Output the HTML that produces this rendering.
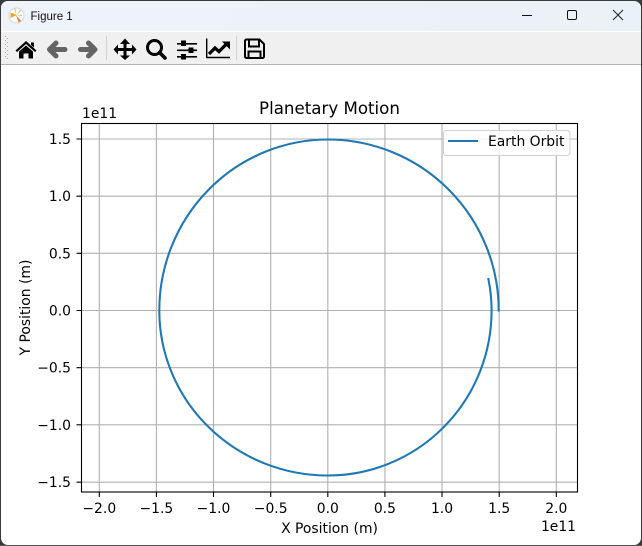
<!DOCTYPE html>
<html>
<head>
<meta charset="utf-8">
<style>
html,body{margin:0;padding:0;width:642px;height:546px;overflow:hidden;background:#fff}
svg{display:block;position:absolute;left:0;top:0}
.m{font-family:"DejaVu Sans",sans-serif;font-size:13.9px;fill:#000}
</style>
</head>
<body>
<svg width="642" height="546" viewBox="0 0 642 546" xmlns="http://www.w3.org/2000/svg">
<defs><linearGradient id="tb" x1="0" x2="1" y1="0" y2="0"><stop offset="0" stop-color="#eff3fa"/><stop offset="1" stop-color="#e9f2f6"/></linearGradient></defs>
<rect width="642" height="546" fill="#3a3a3a"/>
<rect x="1" y="1" width="640" height="544" rx="7" fill="#fff"/>
<path d="M1 31V8a7 7 0 0 1 7-7H634a7 7 0 0 1 7 7V31Z" fill="url(#tb)"/>
<rect x="1" y="31" width="640" height="1" fill="#fff"/>
<rect x="1" y="32" width="640" height="32" fill="#f0f0f0"/>
<rect x="1" y="64" width="640" height="1" fill="#b4b4b4"/>
<rect x="0" y="545" width="642" height="1" fill="#555"/>

<!-- app icon -->
<circle cx="16.5" cy="15.5" r="7.5" fill="#fff" stroke="#d4d4d4"/>
<path d="M10.500 12.500 17 15 10.500 18Z" fill="#f2a32e"/>
<path d="M16 15 21 21 18.500 22.500Z" fill="#f07838"/>
<path d="M16.500 15.500 20 9.500 21 10.500Z" fill="#a8d880"/>
<path d="M16.500 15.500 14 9 15.500 8.500Z" fill="#e8c48a"/>
<path d="M16.500 15.500 22 14.500 22 16Z" fill="#a9dca0"/>
<text x="30.5" y="20" font-family="'Liberation Sans',sans-serif" font-size="11.500px" fill="#111">Figure 1</text>

<!-- window controls -->
<rect x="522" y="15" width="10" height="1" fill="#111"/>
<rect x="567.5" y="10.5" width="9" height="9" rx="1.5" fill="none" stroke="#111"/>
<path d="M613 10 623 20M623 10 613 20" stroke="#222" stroke-width="1" fill="none"/>

<!-- grip -->
<g fill="#a8a8a8"><rect x="5" y="36" width="1" height="1"/><rect x="7" y="38" width="1" height="1"/><rect x="5" y="40" width="1" height="1"/><rect x="7" y="42" width="1" height="1"/><rect x="5" y="44" width="1" height="1"/><rect x="7" y="46" width="1" height="1"/><rect x="5" y="48" width="1" height="1"/><rect x="7" y="50" width="1" height="1"/><rect x="5" y="52" width="1" height="1"/><rect x="7" y="54" width="1" height="1"/><rect x="5" y="56" width="1" height="1"/><rect x="7" y="58" width="1" height="1"/></g>

<!-- home -->
<path d="M26 41 36.500 50.500 35 52 26 44 17 52 15.500 50.500Z" fill="#000"/>
<path d="M31 42.500h3v5l-3-2.600Z" fill="#000"/>
<path d="M19 51.500 26 45.500 33 51.500V58.500H28.500V53.500H23.500V58.500H19Z" fill="#000"/>
<!-- back -->
<path d="M65 49.500H54M56 43 49.500 49.500 56 56" fill="none" stroke="#646464" stroke-width="5" stroke-linecap="round" stroke-linejoin="round"/>
<!-- forward -->
<path d="M80.500 49.500H91M88.500 43 95 49.500 88.500 56" fill="none" stroke="#646464" stroke-width="5" stroke-linecap="round" stroke-linejoin="round"/>
<rect x="106" y="36" width="1" height="24" fill="#d2d2d2"/>
<!-- move -->
<path d="M125 38.500 130 44H126.500V48H132V44.500L136.500 49.500 132 54.500V51H126.500V55.500H130L125 60 120 55.500H123.500V51H118V54.500L113.500 49.500 118 44.500V48H123.500V44H120Z" fill="#000"/>
<!-- zoom -->
<circle cx="154.500" cy="47.500" r="7" fill="none" stroke="#000" stroke-width="3"/>
<path d="M159.500 52.500 165 58" stroke="#000" stroke-width="3.600" stroke-linecap="round"/>
<!-- sliders -->
<g fill="#000"><rect x="177" y="43" width="20" height="1.600"/><rect x="177" y="49.500" width="20" height="1.600"/><rect x="177" y="56" width="20" height="1.600"/><rect x="181" y="40.500" width="5" height="5.500"/><rect x="188.500" y="47.500" width="5" height="5.500"/><rect x="181" y="54" width="5" height="5.500"/></g>
<!-- chart -->
<path d="M206.500 57.500H230" stroke="#000" stroke-width="1.600" fill="none"/>
<path d="M206.700 38.500V58" stroke="#000" stroke-width="1.400" fill="none"/>
<path d="M209 54 215 48 219 51.500 226 44.500" stroke="#000" stroke-width="3.200" fill="none"/>
<path d="M222 41.500H230V49.500Z" fill="#000"/>
<rect x="236" y="36" width="1" height="24" fill="#d2d2d2"/>
<!-- save -->
<path d="M246.500 39.500H259.500L264 44V56.500a1.500 1.500 0 0 1-1.500 1.500H246.500a1.500 1.500 0 0 1-1.500-1.500V41a1.500 1.500 0 0 1 1.500-1.500Z" fill="none" stroke="#000" stroke-width="2"/>
<path d="M249 40V46.500H259V40" fill="none" stroke="#000" stroke-width="2"/>
<path d="M248.500 58V51.500H260.500V58" fill="none" stroke="#000" stroke-width="2"/>

<!-- grid -->
<g stroke="#b0b0b0" stroke-width="1.100" fill="none">
<path d="M99.300 124V492M156.400 124V492M213.500 124V492M270.700 124V492M327.800 124V492M384.900 124V492M442 124V492M499.200 124V492M556.300 124V492"/>
<path d="M82 139H577M82 196.200H577M82 253.300H577M82 310.500H577M82 367.700H577M82 424.800H577M82 482.200H577"/>
</g>

<!-- orbit -->
<path d="M498.700 310.500A170.800 171 0 0 0 327.900 139.500A168.600 171 0 0 0 159.300 310.500A168.600 165 0 0 0 327.900 475.500A163.700 165 0 0 0 491.600 310.500Q491.600 295 488.400 279" fill="none" stroke="#1f77b4" stroke-width="2.080" stroke-linecap="square"/>

<!-- axes -->
<rect x="81.500" y="123.500" width="496" height="368.500" fill="none" stroke="#000" stroke-width="1.100"/>
<g stroke="#000" stroke-width="1.100" fill="none">
<path d="M99.300 492V497M156.400 492V497M213.500 492V497M270.700 492V497M327.800 492V497M384.900 492V497M442 492V497M499.200 492V497M556.300 492V497"/>
<path d="M76.500 139H81.500M76.500 196.200H81.500M76.500 253.300H81.500M76.500 310.500H81.500M76.500 367.700H81.500M76.500 424.800H81.500M76.500 482.200H81.500"/>
</g>

<!-- x tick labels -->
<g class="m" text-anchor="middle">
<text class="m" x="99.300" y="513">−2.0</text>
<text class="m" x="156.400" y="513">−1.5</text>
<text class="m" x="213.500" y="513">−1.0</text>
<text class="m" x="270.700" y="513">−0.5</text>
<text class="m" x="327.800" y="513">0.0</text>
<text class="m" x="384.900" y="513">0.5</text>
<text class="m" x="442" y="513">1.0</text>
<text class="m" x="499.200" y="513">1.5</text>
<text class="m" x="556.300" y="513">2.0</text>
</g>
<!-- y tick labels -->
<g class="m" text-anchor="end">
<text class="m" x="71" y="144">1.5</text>
<text class="m" x="71" y="201.200">1.0</text>
<text class="m" x="71" y="258.300">0.5</text>
<text class="m" x="71" y="315.500">0.0</text>
<text class="m" x="71" y="372.700">−0.5</text>
<text class="m" x="71" y="429.800">−1.0</text>
<text class="m" x="71" y="487">−1.5</text>
</g>
<text class="m" x="82" y="118">1e11</text>
<text class="m" x="576" y="531" text-anchor="end">1e11</text>
<text class="m" x="329.500" y="533" text-anchor="middle">X Position (m)</text>
<text class="m" transform="translate(30 307.500) rotate(-90)" text-anchor="middle">Y Position (m)</text>
<text x="329.500" y="114" text-anchor="middle" font-family="'DejaVu Sans',sans-serif" font-size="16.670px" fill="#000">Planetary Motion</text>

<!-- legend -->
<rect x="443.500" y="130.500" width="126.500" height="25" rx="3" fill="#fff" fill-opacity=".8" stroke="#d0d0d0" stroke-width="1"/>
<path d="M448 141H478" stroke="#1f77b4" stroke-width="2.080"/>
<text class="m" x="488" y="146">Earth Orbit</text>
</svg>
</body>
</html>
